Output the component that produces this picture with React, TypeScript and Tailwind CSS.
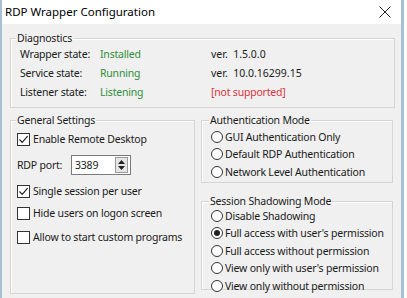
import React from "react";

const diag = [
  { label: "Wrapper state:", value: "Installed", ver: "ver.  1.5.0.0", bad: false },
  { label: "Service state:", value: "Running", ver: "ver.  10.0.16299.15", bad: false },
  { label: "Listener state:", value: "Listening", ver: "[not supported]", bad: true },
];

const authModes = ["GUI Authentication Only", "Default RDP Authentication", "Network Level Authentication"];

const shadowModes = [
  "Disable Shadowing",
  "Full access with user's permission",
  "Full access without permission",
  "View only with user's permission",
  "View only without permission",
];

function Check({ checked, label }: { checked: boolean; label: string }) {
  return (
    <div className="flex items-center h-[22px]">
      <span className="w-[13px] h-[13px] shrink-0 border border-[#333] bg-white flex items-center justify-center">
        {checked && (
          <svg width="11" height="11" viewBox="0 0 11 11">
            <path d="M1.5 5.5 L4.2 8.3 L9.6 2.2" fill="none" stroke="#222" strokeWidth="1.2" />
          </svg>
        )}
      </span>
      <span className="ml-[3px]">{label}</span>
    </div>
  );
}

function Radio({ checked, label }: { checked: boolean; label: string }) {
  return (
    <div className="flex items-center h-[17.5px]">
      <span className="w-[12px] h-[12px] shrink-0 rounded-full border border-[#333] bg-white flex items-center justify-center">
        {checked && <span className="w-[6px] h-[6px] rounded-full bg-[#222]" />}
      </span>
      <span className="ml-[2px]">{label}</span>
    </div>
  );
}

function Group({ title, className, legend = "ml-[5px]", inner, children }: { title: string; className: string; legend?: string; inner: string; children: React.ReactNode }) {
  return (
    <fieldset className={`border border-[#d5d5d5] shadow-[inset_1px_1px_0_#fff] ${className}`}>
      <legend className={`${legend} px-[1px] leading-[12px]`}>{title}</legend>
      <div className={inner}>{children}</div>
    </fieldset>
  );
}

export default function App() {
  return (
    <div className="w-[407px] h-[298px] bg-white overflow-hidden whitespace-nowrap text-[10.5px] tracking-[-0.2px] leading-none text-[#1a1a1a] font-['Segoe_UI','Noto_Sans',sans-serif]">
      <div className="w-[404px] h-[298px] border-l-2 border-r-[3px] border-[#a9bfd2] bg-[#f0f0f0] flex flex-col">
        <div className="h-[24px] bg-white flex items-center justify-between pl-[3px] pr-[10px] shrink-0">
          <span className="text-[11.5px] tracking-normal text-black">RDP Wrapper Configuration</span>
          <svg width="12" height="12" viewBox="0 0 12 12">
            <path d="M0.5 0.5 L11.5 11.5 M11.5 0.5 L0.5 11.5" stroke="#222" strokeWidth="1" />
          </svg>
        </div>

        <div className="px-[8px] pt-[8px]">
          <Group title="Diagnostics" className="w-[385px] h-[76px]" inner="pl-[9px] pt-[1px]">
            {diag.map((d, i) => (
              <div key={i} className="flex h-[19px] items-center">
                <span className="w-[80px]">{d.label}</span>
                <span className="w-[111px] text-[#2f8f3a]">{d.value}</span>
                <span className={d.bad ? "text-[#d8343c]" : "whitespace-pre tracking-normal"}>{d.ver}</span>
              </div>
            ))}
          </Group>

          <div className="flex gap-[6px] mt-[6px]">
            <Group title="General Settings" className="w-[187px] h-[180px]" inner="pl-[6px] pt-[2px]">
              <Check checked label="Enable Remote Desktop" />
              <div className="flex items-center h-[30px]">
                <span className="w-[54px]">RDP port:</span>
                <div className="w-[60px] h-[20px] border border-[#7a7a7a] bg-white flex items-center justify-between pl-[3px]">
                  <span>3389</span>
                  <div className="w-[13px] h-[16px] mr-[2px] border border-[#9a9a9a] bg-[#e5e5e5] flex flex-col items-center justify-center gap-[2px]">
                    <svg width="7" height="4" viewBox="0 0 7 4"><path d="M0 4 L3.5 0 L7 4 Z" fill="#222" /></svg>
                    <svg width="7" height="4" viewBox="0 0 7 4"><path d="M0 0 L3.5 4 L7 0 Z" fill="#222" /></svg>
                  </div>
                </div>
              </div>
              <Check checked label="Single session per user" />
              <Check checked={false} label="Hide users on logon screen" />
              <div className="mt-[2px]">
                <Check checked={false} label="Allow to start custom programs" />
              </div>
            </Group>

            <div className="flex flex-col gap-[12px]">
              <Group title="Authentication Mode" className="w-[192px] h-[69px]" legend="ml-[7px]" inner="pl-[9px] pt-[2px]">
                {authModes.map((m, i) => (
                  <Radio key={i} checked={false} label={m} />
                ))}
              </Group>
              <Group title="Session Shadowing Mode" className="w-[192px] h-[95px]" legend="ml-[7px]" inner="pl-[9px]">
                {shadowModes.map((m, i) => (
                  <Radio key={i} checked={i === 1} label={m} />
                ))}
              </Group>
            </div>
          </div>
        </div>
      </div>
    </div>
  );
}
